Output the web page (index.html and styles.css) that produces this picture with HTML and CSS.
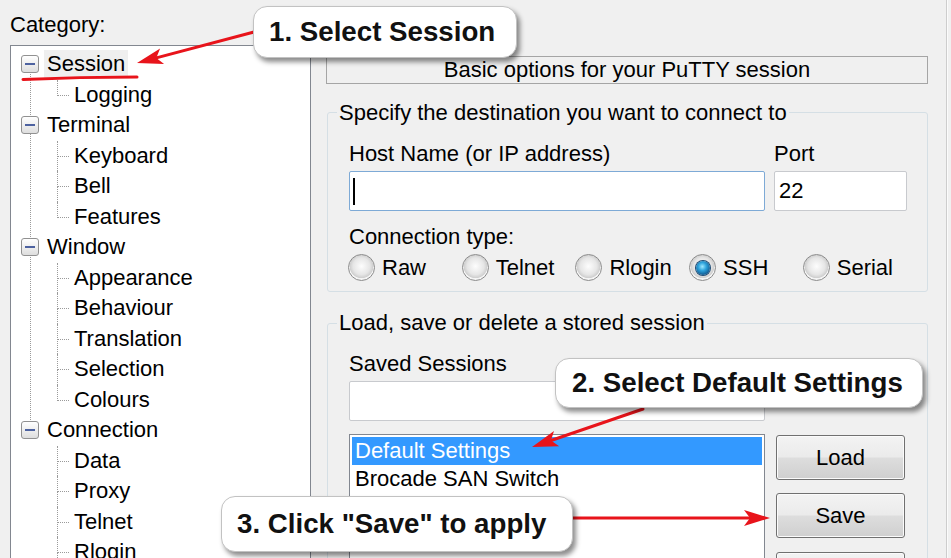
FILE: index.html
```html
<!DOCTYPE html>
<html>
<head>
<meta charset="utf-8">
<title>PuTTY Configuration</title>
<link rel="stylesheet" href="styles.css">
</head>
<body>
<div class="app">
  <div class="left">
    <div class="cat-label">Category:</div>
    <div class="tree">
      <div class="node">
        <div class="row top"><span class="exp"></span><span class="lbl sel">Session</span></div>
        <div class="kids">
          <div class="kid"><span class="lbl">Logging</span></div>
        </div>
      </div>
      <div class="node">
        <div class="row top"><span class="exp"></span><span class="lbl">Terminal</span></div>
        <div class="kids">
          <div class="kid"><span class="lbl">Keyboard</span></div>
          <div class="kid"><span class="lbl">Bell</span></div>
          <div class="kid"><span class="lbl">Features</span></div>
        </div>
      </div>
      <div class="node">
        <div class="row top"><span class="exp"></span><span class="lbl">Window</span></div>
        <div class="kids">
          <div class="kid"><span class="lbl">Appearance</span></div>
          <div class="kid"><span class="lbl">Behaviour</span></div>
          <div class="kid"><span class="lbl">Translation</span></div>
          <div class="kid"><span class="lbl">Selection</span></div>
          <div class="kid"><span class="lbl">Colours</span></div>
        </div>
      </div>
      <div class="node">
        <div class="row top"><span class="exp"></span><span class="lbl">Connection</span></div>
        <div class="kids">
          <div class="kid"><span class="lbl">Data</span></div>
          <div class="kid"><span class="lbl">Proxy</span></div>
          <div class="kid"><span class="lbl">Telnet</span></div>
          <div class="kid more"><span class="lbl">Rlogin</span></div>
        </div>
      </div>
    </div>
  </div>

  <div class="right">
    <div class="title-box">Basic options for your PuTTY session</div>

    <fieldset class="group dest">
      <legend>Specify the destination you want to connect to</legend>
      <div class="dest-row">
        <div class="host-col">
          <div class="flabel">Host Name (or IP address)</div>
          <div class="field host"><span class="caret"></span></div>
        </div>
        <div class="port-col">
          <div class="flabel">Port</div>
          <div class="field port">22</div>
        </div>
      </div>
      <div class="flabel ctype">Connection type:</div>
      <div class="radios">
        <div class="opt"><span class="radio"></span><span class="opt-lbl">Raw</span></div>
        <div class="opt"><span class="radio"></span><span class="opt-lbl">Telnet</span></div>
        <div class="opt"><span class="radio"></span><span class="opt-lbl">Rlogin</span></div>
        <div class="opt"><span class="radio on"></span><span class="opt-lbl">SSH</span></div>
        <div class="opt"><span class="radio"></span><span class="opt-lbl">Serial</span></div>
      </div>
    </fieldset>

    <fieldset class="group store">
      <legend>Load, save or delete a stored session</legend>
      <div class="store-row">
        <div class="store-col">
          <div class="flabel">Saved Sessions</div>
          <div class="field saved"></div>
          <div class="listbox">
            <div class="item selected">Default Settings</div>
            <div class="item">Brocade SAN Switch</div>
          </div>
        </div>
        <div class="btn-col">
          <div class="btn">Load</div>
          <div class="btn">Save</div>
          <div class="btn stub"></div>
        </div>
      </div>
    </fieldset>
  </div>

  <div class="edge"></div>
</div>

<svg class="marks" width="951" height="558" viewBox="0 0 951 558">
  <g fill="#e8141b" stroke="#e8141b" stroke-linecap="round">
    <path d="M23 79.5 Q80 77 137 77" fill="none" stroke-width="3"/>
    <line x1="254" y1="32" x2="156.3" y2="57.9" stroke-width="3"/>
    <polygon points="137,63 160.1,48.6 156.3,57.9 164.1,64" stroke="none"/>
    <line x1="643" y1="409" x2="551" y2="440.5" stroke-width="3"/>
    <polygon points="532,447 554,431 550.9,440.5 559.2,446.2" stroke="none"/>
    <line x1="573" y1="518" x2="750" y2="518" stroke-width="3"/>
    <polygon points="770,518 744,510 750,518 744,526" stroke="none"/>
  </g>
</svg>

<div class="callout c1">1. Select Session</div>
<div class="callout c2">2. Select Default Settings</div>
<div class="callout c3">3. Click "Save" to apply</div>
</body>
</html>
```

FILE: styles.css
```css
* { box-sizing: border-box; }
html, body { margin: 0; padding: 0; }
body {
  width: 951px;
  height: 558px;
  overflow: hidden;
  position: relative;
  background: #f0f0f0;
  font-family: "Liberation Sans", Arial, sans-serif;
  font-size: 22px;
  line-height: 26px;
  color: #000;
}

.app { display: flex; height: 558px; }

/* ---------- left: category tree ---------- */
.left {
  width: 311px;
  flex: none;
  padding-top: 12px;
  display: flex;
  flex-direction: column;
}
.cat-label { padding-left: 10px; height: 26px; flex: none; }
.tree {
  margin: 7px 0 0 10px;
  flex: 1;
  background: #fff;
  border: 1px solid #828790;
  border-bottom: none;
  padding-top: 3px;
  overflow: hidden;
}
.node { position: relative; }
.node:not(:last-child)::before {
  content: "";
  position: absolute;
  left: 19px;
  top: 15px;
  bottom: -15px;
  border-left: 1px dotted #9a9a9a;
}
.row { display: flex; align-items: center; height: 30.5px; }
.exp {
  position: relative;
  z-index: 1;
  flex: none;
  margin-left: 10px;
  width: 18px;
  height: 18px;
  border: 1px solid #919191;
  border-radius: 3px;
  background: linear-gradient(#ffffff, #dedede);
  display: flex;
  align-items: center;
  justify-content: center;
}
.exp::after { content: ""; width: 10px; height: 2px; background: #4d62a0; }
.lbl { padding: 0 3px; line-height: 28px; white-space: nowrap; }
.top .lbl { margin-left: 5px; }
.sel { background: #efefef; }
.kids { margin-left: 46px; }
.kid {
  position: relative;
  display: flex;
  align-items: center;
  height: 30.5px;
  padding-left: 14px;
}
.kid::before {
  content: "";
  position: absolute;
  left: 0;
  top: 0;
  width: 11px;
  height: 50%;
  border-left: 1px dotted #9a9a9a;
  border-bottom: 1px dotted #9a9a9a;
}
.kid:not(:last-child)::after,
.kid.more::after {
  content: "";
  position: absolute;
  left: 0;
  top: 50%;
  bottom: 0;
  border-left: 1px dotted #9a9a9a;
}

/* ---------- right: session panel ---------- */
.right {
  margin-left: 15px;
  width: 602px;
  flex: none;
  display: flex;
  flex-direction: column;
}
.right > * { flex-shrink: 0; }
.title-box {
  margin-top: 56px;
  height: 28px;
  border: 1px solid #a5a5a5;
  text-align: center;
  line-height: 25px;
}
.group {
  margin: 15.5px 0 0 1px;
  padding: 15px 20px 10px 21px;
  border: 1px solid #d5dfe5;
  border-radius: 3px;
  min-width: 0;
}
.group legend { padding: 0 2px; margin-left: -12px; line-height: 26px; }
.store { margin-top: 18px; }

.flabel { line-height: 26px; white-space: nowrap; }
.dest-row { display: flex; }
.host-col { width: 416px; flex: none; }
.port-col { width: 133px; flex: none; margin-left: 9px; }
.field {
  height: 40px;
  margin-top: 4.6px;
  background: #fff;
  border: 1px solid #c8cace;
  border-radius: 2px;
  padding: 0 4px;
  line-height: 38px;
}
.host { border-color: #7eaad6; padding-left: 3px; display: flex; align-items: center; }
.caret { width: 2px; height: 27px; background: #000; }
.ctype { margin-top: 13.4px; }
.radios {
  display: grid;
  grid-template-columns: repeat(5, 113.7px);
  margin: 4px 0 0 -1px;
}
.opt { display: flex; align-items: center; height: 27px; }
.opt-lbl { margin-left: 7px; }
.radio {
  flex: none;
  width: 27px;
  height: 27px;
  border-radius: 50%;
  border: 1px solid #8c8c8c;
  background: radial-gradient(circle at 50% 45%, #fdfdfd 0, #e6e6e6 45%, #cfcfcf 62%, #f4f4f4 66%, #f4f4f4 100%);
  display: flex;
  align-items: center;
  justify-content: center;
}
.radio.on::after {
  content: "";
  width: 14px;
  height: 14px;
  border-radius: 50%;
  background: radial-gradient(circle at 45% 40%, #9ee8ff 0, #2ea3dc 35%, #0c4f86 80%);
  box-shadow: 0 0 0 1px #1b4a74;
}

.store-row { display: flex; }
.store-col { width: 416px; flex: none; }
.saved { margin-top: 3.6px; }
.listbox {
  margin-top: 13px;
  height: 200px;
  background: #fff;
  border: 1px solid #828790;
  padding: 2px;
}
.item { height: 27.5px; line-height: 27.5px; padding-left: 3px; white-space: nowrap; }
.item.selected { background: #3399ff; color: #fff; }
.btn-col { width: 129px; flex: none; margin-left: 11px; padding-top: 83.6px; }
.btn {
  height: 45px;
  border: 1px solid #707070;
  border-radius: 3px;
  background: linear-gradient(#f3f3f3 0%, #ebebeb 48%, #dddddd 52%, #cfcfcf 100%);
  box-shadow: inset 0 0 0 1px #fbfbfb;
  text-align: center;
  line-height: 43px;
}
.btn + .btn { margin-top: 13px; }
.btn.stub { margin-top: 14px; }

.edge {
  margin-left: 18px;
  width: 2px;
  flex: none;
  border-left: 1px solid #cdcdcd;
  border-right: 1px solid #fbfbfb;
}

/* ---------- annotations ---------- */
.marks { position: absolute; left: 0; top: 0; pointer-events: none; }
.callout {
  position: absolute;
  display: flex;
  align-items: center;
  background: #fff;
  border: 1px solid #c2c2c2;
  border-radius: 14px;
  box-shadow: 3px 4px 5px rgba(0, 0, 0, 0.45);
  font-weight: bold;
  font-size: 27.7px;
  line-height: 1;
  color: #111;
  white-space: nowrap;
}
.c1 { left: 253px; top: 6px; width: 264px; height: 52px; padding-left: 15px; }
.c2 { left: 555px; top: 358px; width: 368px; height: 50px; padding-left: 16px; }
.c3 { left: 221px; top: 496px; width: 352px; height: 56px; padding-left: 15px; }
```
